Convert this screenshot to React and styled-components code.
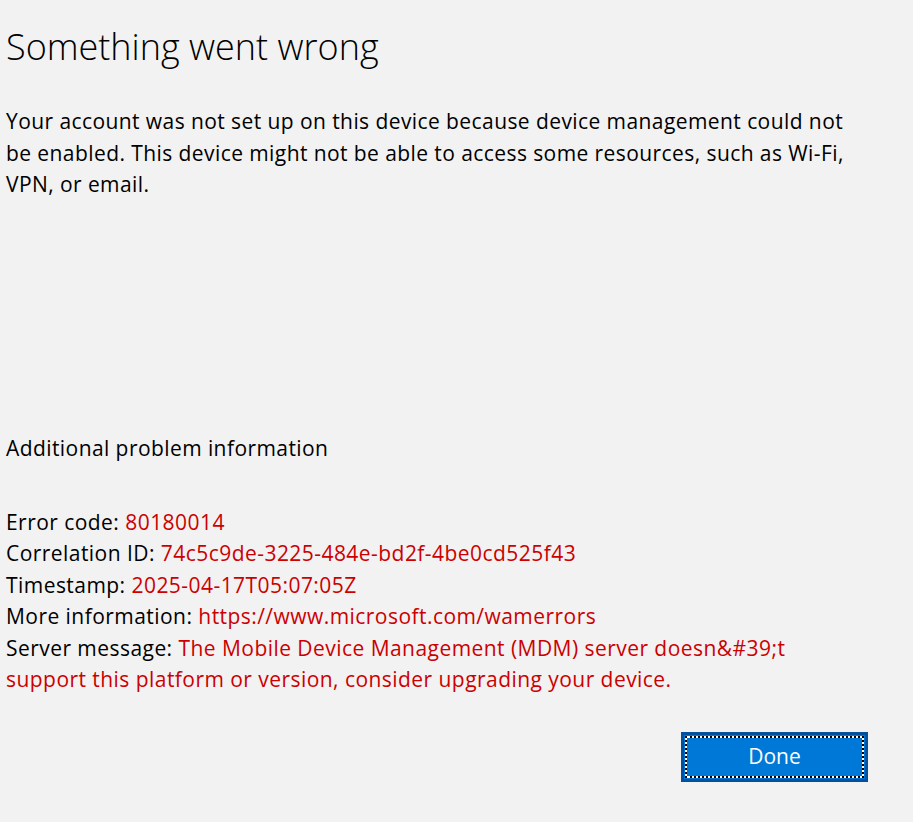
import React from "react";
import styled, { createGlobalStyle } from "styled-components";

const GlobalStyle = createGlobalStyle`
  html, body {
    margin: 0;
    padding: 0;
    background: #f2f2f2;
  }
  body {
    font-family: "Open Sans", "Noto Sans", sans-serif;
    color: #000;
  }
`;

const Page = styled.div`
  width: 913px;
  height: 822px;
  box-sizing: border-box;
  padding: 23px 6px 0 6px;
  display: flex;
  flex-direction: column;
  overflow: hidden;
`;

const Title = styled.h1`
  margin: 0;
  font-size: 36px;
  font-weight: 300;
  line-height: 48px;
`;

const Message = styled.p`
  margin: 35px 0 0 0;
  width: 858px;
  font-size: 21px;
  line-height: 31.5px;
  letter-spacing: 0.42px;
`;

const SectionTitle = styled.h2`
  margin: 232px 0 0 0;
  font-size: 21px;
  font-weight: 400;
  line-height: 31px;
  letter-spacing: 0.42px;
`;

const InfoList = styled.div`
  margin-top: 43px;
  width: 858px;
`;

const InfoRow = styled.div`
  font-size: 21px;
  line-height: 31.5px;
  letter-spacing: 0.45px;
`;

const Value = styled.span`
  color: #cc0000;
`;

const Footer = styled.div`
  display: flex;
  justify-content: flex-end;
  margin-top: 36px;
  padding-right: 39px;
`;

const DoneButton = styled.button`
  width: 187px;
  height: 50px;
  box-sizing: border-box;
  border: 3px solid #00509e;
  background: #0078d7;
  padding: 1px;
  font-family: "Open Sans", "Noto Sans", sans-serif;
  cursor: pointer;
`;

const FocusRect = styled.span`
  display: flex;
  align-items: center;
  justify-content: center;
  height: 100%;
  box-sizing: border-box;
  border: 2px dotted #000;
  background: linear-gradient(#0078d7, #0078d7) padding-box, #fff border-box;
  color: #fff;
  font-size: 21px;
  padding-bottom: 1px;
`;

const rows = [
  ["Error code: ", "80180014"],
  ["Correlation ID: ", "74c5c9de-3225-484e-bd2f-4be0cd525f43"],
  ["Timestamp: ", "2025-04-17T05:07:05Z"],
  ["More information: ", "https://www.microsoft.com/wamerrors"],
  [
    "Server message: ",
    "The Mobile Device Management (MDM) server doesn&#39;t support this platform or version, consider upgrading your device.",
  ],
];

export default function App() {
  return (
    <>
      <GlobalStyle />
      <Page>
        <Title>Something went wrong</Title>
        <Message>
          Your account was not set up on this device because device management could not
          be enabled. This device might not be able to access some resources, such as Wi-Fi,
          VPN, or email.
        </Message>
        <SectionTitle>Additional problem information</SectionTitle>
        <InfoList>
          {rows.map(([label, value]) => (
            <InfoRow key={label}>
              {label}
              <Value>{value}</Value>
            </InfoRow>
          ))}
        </InfoList>
        <Footer>
          <DoneButton>
            <FocusRect>Done</FocusRect>
          </DoneButton>
        </Footer>
      </Page>
    </>
  );
}
